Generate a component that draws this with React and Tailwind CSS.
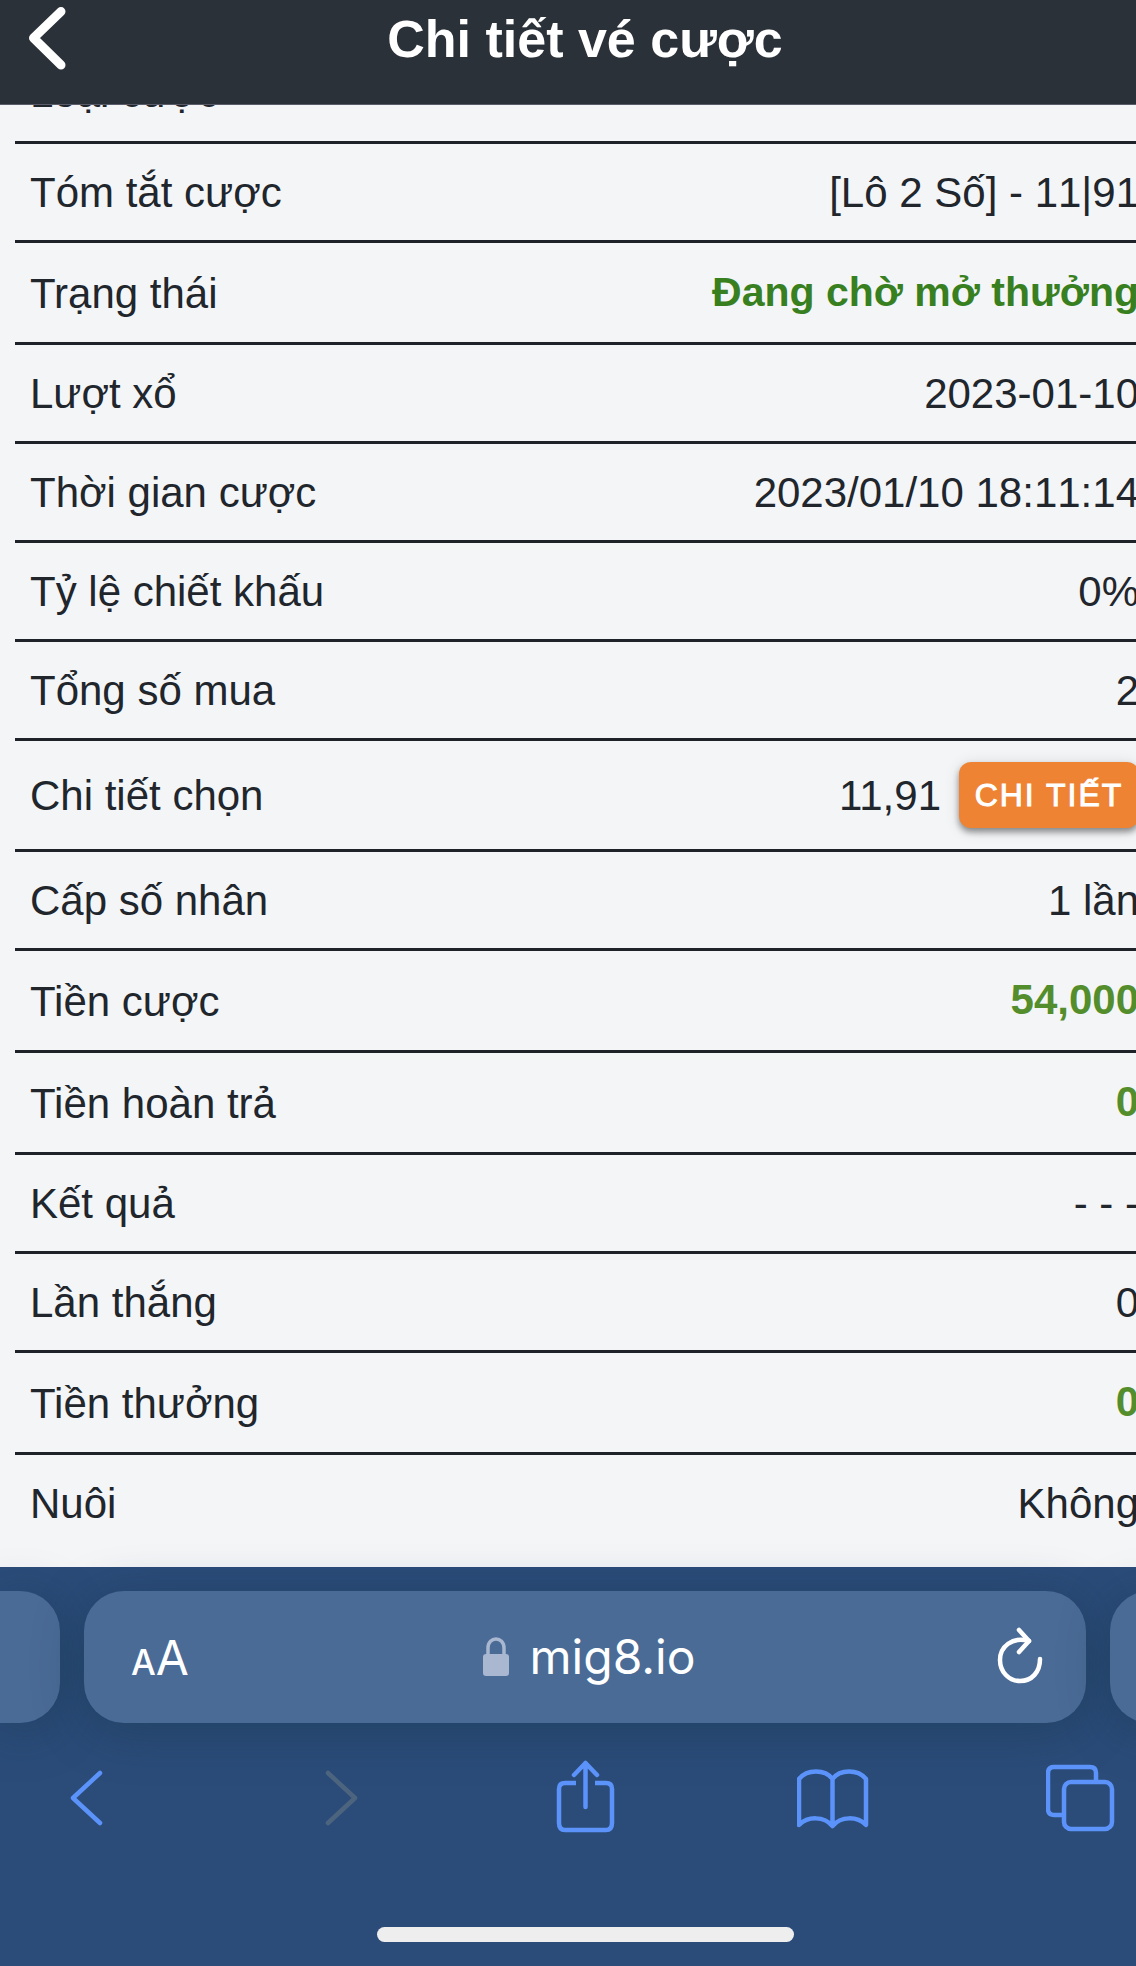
import React, { useState } from "react";

const initialRows = [
  { label: "Loại cược", value: "Lô 2 Số", tone: "purple" },
  { label: "Tóm tắt cược", value: "[Lô 2 Số] - 11|91" },
  { label: "Trạng thái", value: "Đang chờ mở thưởng", tone: "status" },
  { label: "Lượt xổ", value: "2023-01-10" },
  { label: "Thời gian cược", value: "2023/01/10 18:11:14" },
  { label: "Tỷ lệ chiết khấu", value: "0%" },
  { label: "Tổng số mua", value: "2" },
  { label: "Chi tiết chọn", value: "11,91", action: "CHI TIẾT" },
  { label: "Cấp số nhân", value: "1 lần" },
  { label: "Tiền cược", value: "54,000", tone: "money" },
  { label: "Tiền hoàn trả", value: "0", tone: "money" },
  { label: "Kết quả", value: "- - -" },
  { label: "Lần thắng", value: "0" },
  { label: "Tiền thưởng", value: "0", tone: "money" },
  { label: "Nuôi", value: "Không" },
];

const tones = {
  purple: "text-[#b34fd0] font-bold pb-1",
  status: "text-[#38801f] text-[41px] font-bold pb-1",
  money: "text-[#538d2c] font-bold pb-1",
};

const Header = () => (
  <header className="flex h-[105px] items-start border-b border-[#5b5d6b] bg-[#2b3139] text-white">
    <button type="button" aria-label="Quay lại" className="w-[100px]">
      <svg width="100" height="76" viewBox="0 0 100 76" fill="none">
        <path d="M61 11.500L33.500 38L61 65" stroke="#fff" strokeWidth="9" strokeLinecap="round" strokeLinejoin="round" />
      </svg>
    </button>
    <h1 className="flex-1 pt-[9px] text-center text-[52px] leading-[60px] font-bold">Chi tiết vé cược</h1>
    <div className="w-[100px]" />
  </header>
);

const Row = ({ label, value, tone, action, last }) => {
  const height = action ? "h-[111px]" : tone ? "h-[102px]" : last ? "h-[96px]" : "h-[99px]";
  const border = last ? "" : "border-b-[3px] border-[#20222a]";

  return (
    <tr className={height}>
      <th scope="row" className={`pt-[2px] pl-[15px] text-left font-normal whitespace-nowrap ${border}`}>
        {label}
      </th>
      <td
        className={`pr-4 text-right whitespace-nowrap ${border} ${action ? "" : "pt-[2px] [font-kerning:none]"} ${
          tone ? tones[tone] : ""
        }`}
      >
        {action ? (
          <div className="flex items-center justify-end gap-[18px]">
            <span className="pt-[2px]">{value}</span>
            <button
              type="button"
              className="h-[66px] w-[180px] rounded-xl bg-[#ee8433] text-[32px] tracking-[2px] text-white shadow-[0_4px_6px_rgba(0,0,0,0.4),0_2px_16px_rgba(0,0,0,0.12)] [-webkit-text-stroke:1px_white]"
            >
              {action}
            </button>
          </div>
        ) : (
          value
        )}
      </td>
    </tr>
  );
};

const ToolButton = ({ label, color = "#5b93fb", disabled, children }) => (
  <button type="button" aria-label={label} disabled={disabled} className="w-[74px]">
    <svg
      width="74"
      height="80"
      viewBox="0 0 74 80"
      fill="none"
      stroke={color}
      strokeWidth="4.500"
      strokeLinecap="round"
      strokeLinejoin="round"
    >
      {children}
    </svg>
  </button>
);

const BrowserBar = () => {
  const [url, setUrl] = useState("mig8.io");

  return (
    <footer className="flex flex-col bg-[#2b4c79] pt-6">
      <div className="flex h-[132px] gap-6">
        <div className="w-[60px] rounded-r-[40px] bg-[#4a6b96] shadow-[0_8px_50px_rgba(20,50,70,0.4)]" />
        <div className="flex flex-1 items-center rounded-[40px] bg-[#4a6b96] px-[43px] text-white shadow-[0_8px_50px_rgba(20,50,70,0.4)]">
          <button
            type="button"
            aria-label="Cỡ chữ"
            className="w-[64px] pt-[6px] pl-1 text-left font-[Inter,sans-serif] leading-[60px]"
          >
            <span className="text-[35px] font-medium">A</span>
            <span className="text-[48px]">A</span>
          </button>
          <div className="flex flex-1 items-center justify-center gap-[21px] pr-[10px]">
            <svg width="26" height="40" viewBox="0 0 26 40" fill="none">
              <rect y="17" width="26" height="22" rx="3" fill="#a9b7d0" />
              <path d="M5 18V11C5 -1 21 -1 21 11V18" stroke="#a9b7d0" strokeWidth="3.500" />
            </svg>
            <input
              type="text"
              aria-label="Địa chỉ trang"
              value={url}
              onChange={(e) => setUrl(e.target.value)}
              className="field-sizing-content bg-transparent font-[Inter,sans-serif] text-[48px] leading-[60px] outline-none"
            />
          </div>
          <button type="button" aria-label="Tải lại" className="w-[46px]">
            <svg width="46" height="60" viewBox="0 0 46 60" fill="none" stroke="#fff" strokeWidth="4.500" strokeLinecap="round" strokeLinejoin="round">
              <path d="M32 14C15 9 3 20 3 33C3 45 12 54 23 54C35 54 43 45 43 32" />
              <path d="M22 3L32 14L22 25" />
            </svg>
          </button>
        </div>
        <div className="w-[60px] rounded-l-[40px] bg-[#4a6b96] shadow-[0_8px_50px_rgba(20,50,70,0.4)]" />
      </div>

      <nav className="flex justify-between px-[50px] pt-[34px]">
        <ToolButton label="Trang trước">
          <path d="M50 16L23 41L50 66" />
        </ToolButton>
        <ToolButton label="Trang sau" color="#4d647f" disabled>
          <path d="M29 16L56 41L29 66" />
        </ToolButton>
        <ToolButton label="Chia sẻ">
          <path d="M28 26H17C13 26 11 28 11 32V66C11 71 13 73 17 73H58C62 73 64 71 64 66V32C64 28 62 26 58 26H47" strokeLinecap="butt" />
          <path d="M37.500 50V6M26 18L37.500 6L49 18" />
        </ToolButton>
        <ToolButton label="Dấu trang">
          <path d="M35.500 22C28 12 10 12 2 22V68C11 59 27 59 35.500 69C44 59 60 59 69 68V22C61 12 43 12 35.500 22V68" />
        </ToolButton>
        <ToolButton label="Thẻ">
          <path d="M50 23V16C50 12 48 10 44 10H8C4 10 2 12 2 16V52C2 56 4 58 8 58H16" />
          <rect x="18" y="25" width="48" height="47" rx="7" />
        </ToolButton>
      </nav>

      <div className="mt-[90px] mb-6 h-[15px] w-[417px] self-center rounded-full bg-[#eeeeef]" />
    </footer>
  );
};

const App = () => {
  return (
    <div className="overflow-hidden">
      {/* the page runs a little past the right side of the window */}
      <div className="w-[calc(100%+34px)] bg-[#f4f5f7] font-['Liberation_Sans',Arial,sans-serif] text-[42px] leading-[48px] text-[#21262d]">
        <Header />
        <main className="overflow-hidden px-[15px] pb-4">
          {/* scrolled so that the first row is partly under the header */}
          <table className="-mt-[63px] w-full border-separate border-spacing-0">
            <tbody>
              {initialRows.map((row, index) => (
                <Row key={row.label} {...row} last={index === initialRows.length - 1} />
              ))}
            </tbody>
          </table>
        </main>
        <BrowserBar />
      </div>
    </div>
  );
};

export default App;
